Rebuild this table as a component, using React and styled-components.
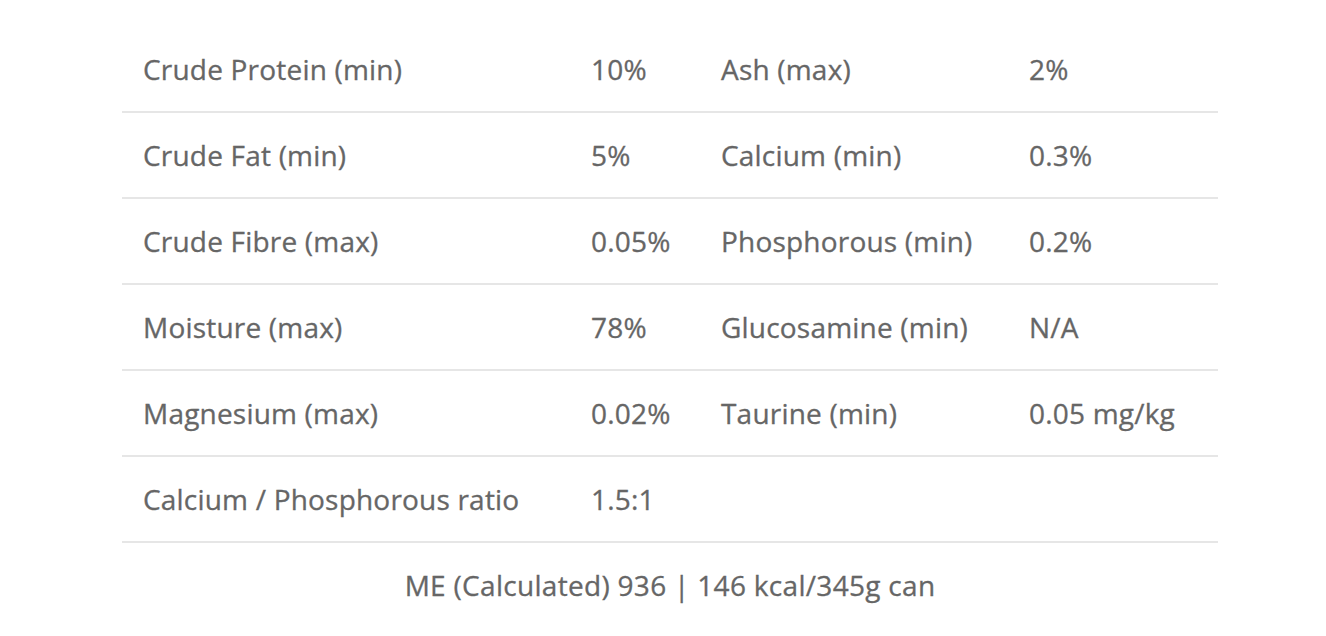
import React from "react";
import styled, { createGlobalStyle } from "styled-components";

const GlobalStyle = createGlobalStyle`
  html, body {
    margin: 0;
    background: #ffffff;
    font-family: "Open Sans", Lato, sans-serif;
  }
`;

const Page = styled.div`
  min-height: 100vh;
  box-sizing: border-box;
  padding: 27px 108px 0 122px;
`;

const Table = styled.div`
  width: 1096px;
`;

const Row = styled.div`
  display: grid;
  grid-template-columns: 448px 130px 308px 210px;
  height: 86px;
  border-bottom: 2px solid #e6e6e6;
  box-sizing: border-box;
  align-items: center;
`;

const Cell = styled.div`
  padding-left: 21px;
  font-size: 28px;
  letter-spacing: 0.2px;
  line-height: 1;
  color: #666666;
  -webkit-text-stroke: 0.3px #666666;
  white-space: nowrap;
`;

const Footer = styled.div`
  text-align: center;
  font-size: 28px;
  letter-spacing: 0.3px;
  line-height: 40px;
  color: #666666;
  -webkit-text-stroke: 0.3px #666666;
  padding-top: 22px;
`;

const rows = [
  ["Crude Protein (min)", "10%", "Ash (max)", "2%"],
  ["Crude Fat (min)", "5%", "Calcium (min)", "0.3%"],
  ["Crude Fibre (max)", "0.05%", "Phosphorous (min)", "0.2%"],
  ["Moisture (max)", "78%", "Glucosamine (min)", "N/A"],
  ["Magnesium (max)", "0.02%", "Taurine (min)", "0.05 mg/kg"],
  ["Calcium / Phosphorous ratio", "1.5:1", "", ""],
];

export default function App() {
  return (
    <>
      <GlobalStyle />
      <Page>
        <Table>
          {rows.map((r) => (
            <Row key={r[0]}>
              {r.map((c, i) => (
                <Cell key={i}>{c}</Cell>
              ))}
            </Row>
          ))}
          <Footer>ME (Calculated) 936 | 146 kcal/345g can</Footer>
        </Table>
      </Page>
    </>
  );
}
